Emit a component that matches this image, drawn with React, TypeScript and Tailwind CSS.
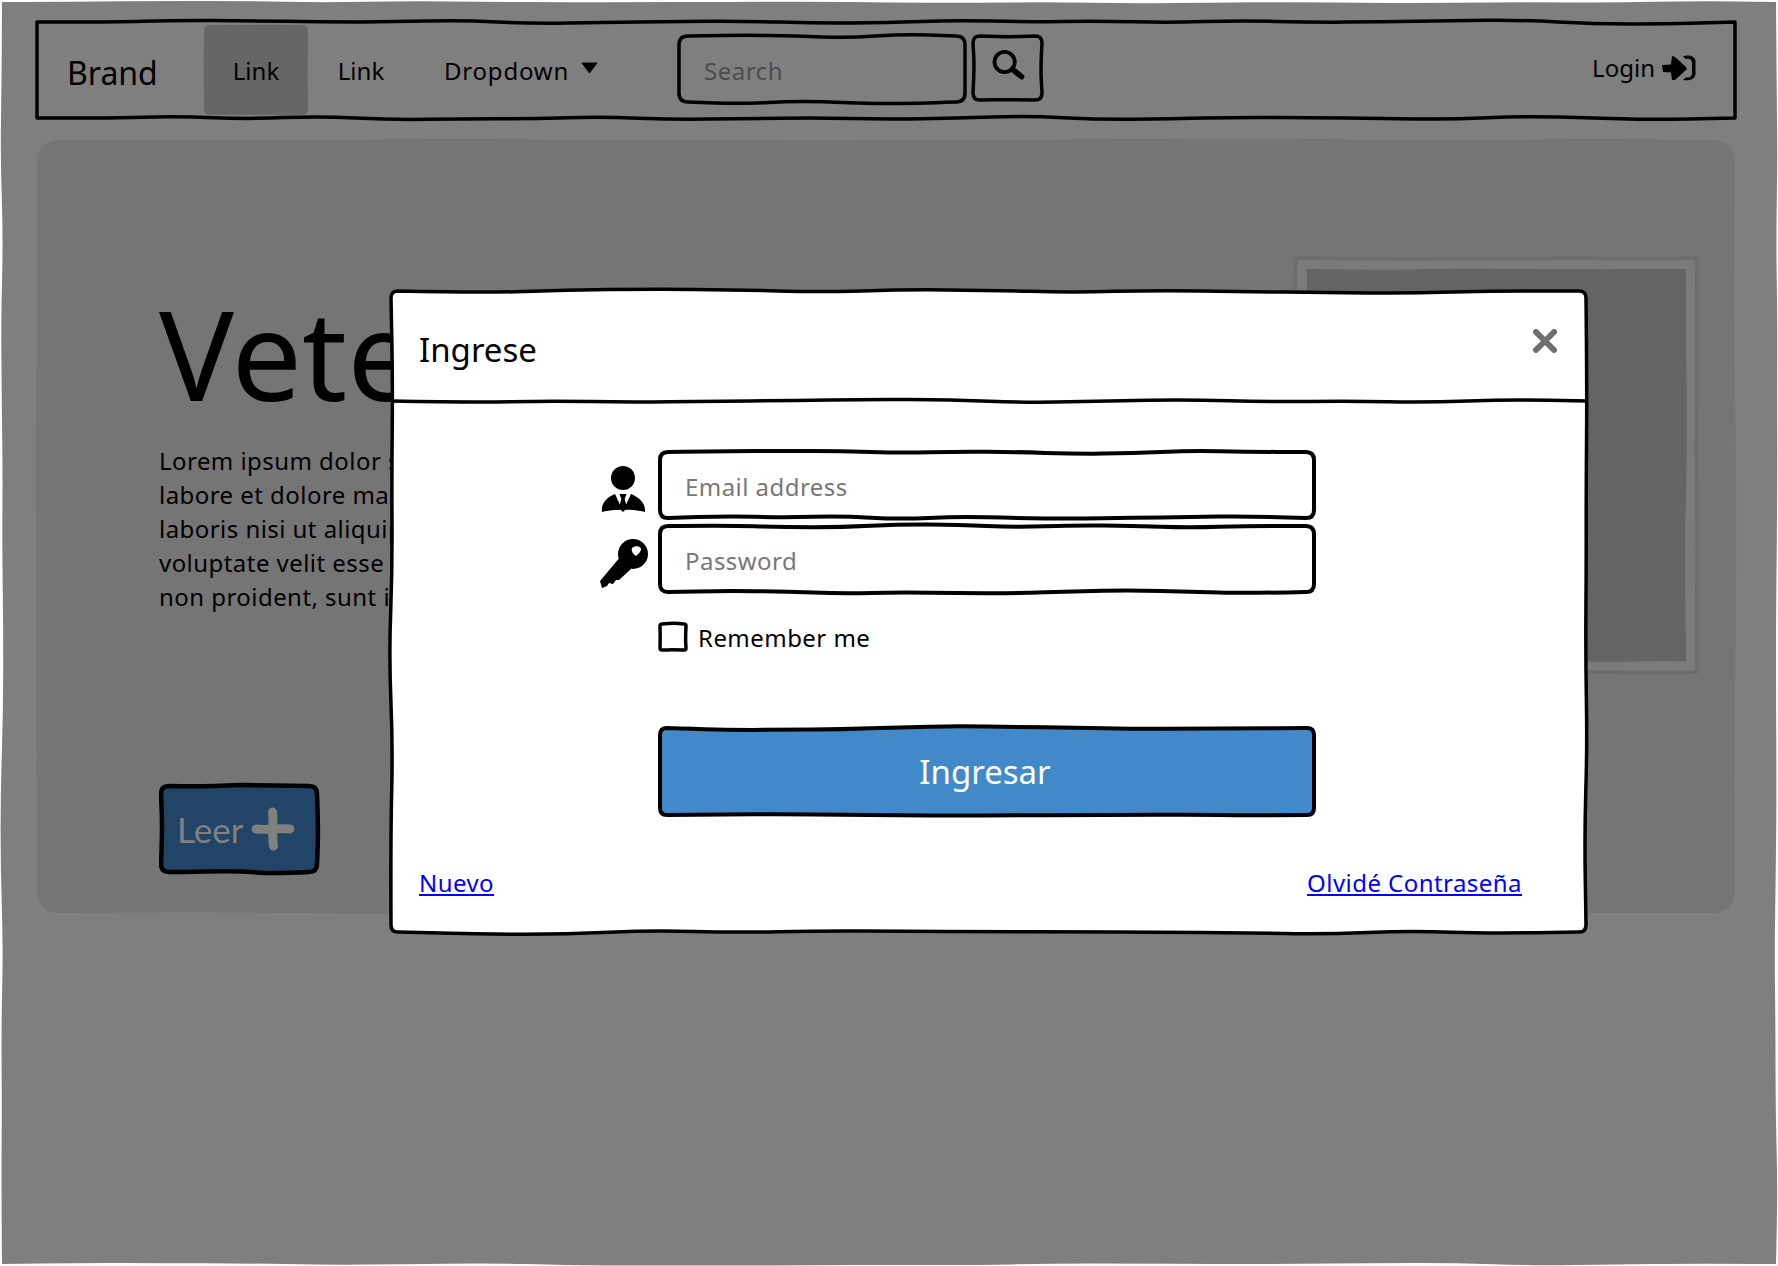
import { ReactNode } from 'react';

// small seeded generator so the hand drawn lines stay the same on each render
function makeRandom(seed: number) {
  let s = seed * 9301 + 49297;
  return () => {
    s = (s * 9301 + 49297) % 233280;
    return s / 233280;
  };
}

function wobbleSide(x0: number, y0: number, x1: number, y1: number, rnd: () => number, amp: number, step: number) {
  const len = Math.hypot(x1 - x0, y1 - y0);
  const n = Math.max(1, Math.round(len / step));
  const nx = -(y1 - y0) / len;
  const ny = (x1 - x0) / len;
  const pts: [number, number][] = [[x0, y0]];
  for (let i = 1; i < n; i++) {
    const off = (rnd() - 0.5) * 2 * amp;
    pts.push([x0 + ((x1 - x0) * i) / n + nx * off, y0 + ((y1 - y0) * i) / n + ny * off]);
  }
  pts.push([x1, y1]);
  let d = '';
  for (let i = 1; i < pts.length - 1; i++) {
    const mx = (pts[i][0] + pts[i + 1][0]) / 2;
    const my = (pts[i][1] + pts[i + 1][1]) / 2;
    d += `Q${pts[i][0].toFixed(1)} ${pts[i][1].toFixed(1)} ${mx.toFixed(1)} ${my.toFixed(1)} `;
  }
  return d + `L${x1} ${y1} `;
}

function boxPath(w: number, h: number, r: number, seed: number, amp: number, step: number) {
  const rnd = makeRandom(seed);
  let d = `M${r} 0 `;
  d += wobbleSide(r, 0, w - r, 0, rnd, amp, step);
  d += `Q${w} 0 ${w} ${r} `;
  d += wobbleSide(w, r, w, h - r, rnd, amp, step);
  d += `Q${w} ${h} ${w - r} ${h} `;
  d += wobbleSide(w - r, h, r, h, rnd, amp, step);
  d += `Q0 ${h} 0 ${h - r} `;
  d += wobbleSide(0, h - r, 0, r, rnd, amp, step);
  d += `Q0 0 ${r} 0 Z`;
  return d;
}

interface SketchProps {
  w: number;
  h: number;
  seed: number;
  r?: number;
  fill?: string;
  stroke?: string;
  strokeWidth?: number;
  amp?: number;
  step?: number;
}

// the wobbly outline behind a box, parent needs "relative isolate"
function Sketch({ w, h, seed, r = 6, fill = 'none', stroke = 'none', strokeWidth = 3, amp = 2, step = 60 }: SketchProps) {
  return (
    <svg width={w} height={h} className="absolute left-0 top-0 -z-10 overflow-visible pointer-events-none">
      <path d={boxPath(w, h, r, seed, amp, step)} fill={fill} stroke={stroke} strokeWidth={strokeWidth} strokeLinejoin="round" />
    </svg>
  );
}

function NavLink({ children, className }: { children: ReactNode; className: string }) {
  return <a className={`flex items-center justify-center text-[24px] text-black ${className}`}>{children}</a>;
}

function SearchGlyph() {
  return (
    <svg width="36" height="36" viewBox="0 0 32 32" fill="none" stroke="black">
      <circle cx="13" cy="12.5" r="9" strokeWidth="3.4" />
      <path d="M20 19 L28 25.5" strokeWidth="5" strokeLinecap="round" />
    </svg>
  );
}

function LoginGlyph() {
  return (
    <svg width="34" height="26" viewBox="0 0 34 26" fill="black" stroke="none">
      <path d="M0 10 L9 9.5 L10 1 L13 2 L24 12 L25 14 L13 25 L10 25 L9 17.5 L1 17 Z" />
      <path d="M21 1 C27 -0.5 33 1 33.5 6 L33.5 19 C33 24.5 27 26 21 25 L24 22.5 C27 23 30 22 30 18 L30 8 C30 4 27 3 23.5 4 Z" />
    </svg>
  );
}

function PlusGlyph() {
  return (
    <svg width="44" height="44" viewBox="0 0 44 44" fill="none" stroke="#808080" strokeWidth="9" strokeLinecap="round">
      <path d="M21.5 5 C23 15 20.5 28 22.5 39" />
      <path d="M5 22 C16 23.5 28 20.5 39 22" />
    </svg>
  );
}

function UserGlyph() {
  return (
    <svg width="48" height="54" viewBox="0 0 48 54" className="shrink-0">
      <circle cx="23" cy="15" r="12" fill="black" />
      <path d="M2 49 C1 42 5 35 15 31 L31 31 C41 35 46 42 45 49 C35 46 12 46 2 49 Z" fill="black" />
      <path d="M15 31 L23 48 L31 31 Z" fill="white" />
      <path d="M19.5 31 H26.5 L24.7 36 L27 45 L23 49 L19 45 L21.3 36 Z" fill="black" />
    </svg>
  );
}

function KeyGlyph() {
  return (
    <svg width="52" height="54" viewBox="0 0 52 54" className="shrink-0">
      <circle cx="35" cy="18" r="15" fill="black" />
      <path d="M23 20 L2 45 L4 52 L9 50 L11 47 L15 48 L18 44 L21 44 L33 33 Z" fill="black" />
      <path d="M34 12 C37 9 43 10 43 13 C43 16 40 18 38 20 C35 18 33 15 34 12 Z" fill="white" />
    </svg>
  );
}

function LoginModal() {
  return (
    <div className="absolute left-[391px] top-[291px] isolate h-[641px] w-[1195px]">
      <Sketch w={1195} h={641} seed={11} fill="#ffffff" stroke="#000000" strokeWidth={3.5} r={7} step={85} amp={2.4} />
      <div className="relative flex h-[110px] items-start justify-between pl-[28px] pr-[29px]">
        <h4 className="pt-[37px] text-[33px] leading-[44px] text-black">Ingrese</h4>
        <svg width="24" height="24" viewBox="0 0 24 24" className="mt-[38px]" stroke="#6f6f6f" strokeWidth="6" strokeLinecap="round">
          <path d="M3 3 L21 21 M21 3 L3 21" />
        </svg>
        <svg width="1195" height="4" className="absolute left-0 top-[108px] overflow-visible">
          <path d={`M0 2 ${wobbleSide(0, 2, 1197, 2, makeRandom(5), 1.8, 80)}`} fill="none" stroke="black" strokeWidth="3.5" />
        </svg>
      </div>

      <div className="flex flex-col pl-[269px] pt-[51px] tracking-[0.45px]">
        <div className="relative flex w-[654px] flex-col gap-[8px]">
          <div className="relative isolate h-[66px] w-[654px]">
            <Sketch w={654} h={66} seed={21} stroke="#000000" strokeWidth={4} r={8} />
            <input placeholder="Email address" className="h-full w-full bg-transparent pl-[25px] pt-[2px] text-[24px] tracking-[0.45px] text-black outline-none placeholder:text-[#777777]" />
            <div className="absolute left-[-60px] top-[11px]"><UserGlyph /></div>
          </div>
          <div className="relative isolate h-[66px] w-[654px]">
            <Sketch w={654} h={66} seed={33} stroke="#000000" strokeWidth={4} r={8} />
            <input placeholder="Password" className="h-full w-full bg-transparent pl-[25px] pt-[2px] text-[24px] tracking-[0.45px] text-black outline-none placeholder:text-[#777777]" />
            <div className="absolute left-[-62px] top-[10px]"><KeyGlyph /></div>
          </div>
        </div>

        <label className="mt-[31px] flex h-[28px] items-center gap-[12px] text-[24px] text-black">
          <span className="relative isolate h-[26px] w-[26px]">
            <Sketch w={26} h={26} seed={4} stroke="#000000" strokeWidth={3.5} r={2} step={13} amp={1.2} />
          </span>
          <span className="pt-[1px]">Remember me</span>
        </label>

        <button className="relative isolate mt-[77px] flex h-[87px] w-[654px] items-center justify-center pr-[4px] text-[33px] tracking-normal text-white">
          <Sketch w={654} h={87} seed={47} fill="#4289c9" stroke="#000000" strokeWidth={4} r={7} />
          Ingresar
        </button>
      </div>

      <div className="flex items-center justify-between pl-[28px] pr-[64px] pt-[52px] text-[24px] leading-[32px] tracking-[0.45px]">
        <a href="#" className="text-[#0000ff] underline">Nuevo</a>
        <a href="#" className="text-[#0000ff] underline">Olvidé Contraseña</a>
      </div>
    </div>
  );
}

export default function App() {
  return (
    <div className="relative isolate h-[1266px] w-[1778px] overflow-hidden bg-white font-['Noto_Sans',sans-serif] text-black">
      <svg width="1778" height="1266" className="absolute left-0 top-0 -z-10">
        <path d={boxPath(1774, 1262, 0, 2, 1.6, 80)} transform="translate(2 2)" fill="#7f7f7f" />
      </svg>

      <div className="flex flex-col px-[37px] pt-[22px]">
        <nav className="relative isolate flex h-[96px] w-[1698px] items-stretch">
          <Sketch w={1698} h={96} seed={7} stroke="#000000" strokeWidth={3.5} r={0} step={70} amp={2.2} />
          <a className="flex w-[167px] items-center pl-[30px] pt-[5px] text-[32px] text-black">Brand</a>
          <div className="relative isolate my-[3px] flex w-[104px]">
            <Sketch w={104} h={90} seed={9} fill="#666666" r={6} amp={1} step={40} />
            <NavLink className="w-full pt-[1px]">Link</NavLink>
          </div>
          <NavLink className="w-[106px] pt-[1px]">Link</NavLink>
          <NavLink className="w-[184px] justify-start gap-[12px] pl-[30px] pt-[1px] tracking-[0.8px]">
            Dropdown
            <svg width="20" height="14" viewBox="0 0 20 14" className="mb-[6px]"><path d="M1 1 H19 L10 13 Z" fill="black" stroke="black" strokeLinejoin="round" /></svg>
          </NavLink>
          <div className="ml-[81px] flex items-start gap-[8px] pt-[14px]">
            <div className="relative isolate h-[66px] w-[286px]">
              <Sketch w={286} h={66} seed={15} stroke="#000000" strokeWidth={3.5} r={9} step={50} />
              <input placeholder="Search" className="h-full w-full bg-transparent pl-[25px] pt-[2px] text-[24px] tracking-[0.5px] outline-none placeholder:text-[#4d4d4d]" />
            </div>
            <button className="relative isolate flex h-[64px] w-[69px] items-start justify-center pt-[12px]">
              <Sketch w={69} h={64} seed={18} stroke="#000000" strokeWidth={3.5} r={7} step={30} />
              <SearchGlyph />
            </button>
          </div>
          <div className="ml-auto flex items-center gap-[7px] pr-[39px] pb-[4px] text-[24px]">
            <a>Login</a>
            <LoginGlyph />
          </div>
        </nav>

        <section className="relative isolate mt-[22px] flex h-[773px] w-[1698px] justify-between pl-[122px] pr-[38px]">
          <Sketch w={1698} h={773} seed={25} fill="#757575" r={24} step={140} amp={1.5} />
          <div className="flex w-[1100px] flex-col overflow-hidden whitespace-nowrap">
            <h1 className="mt-[125px] h-[175px] text-[125px] leading-[175px] text-black">Veterinaria</h1>
            <p className="mt-[4px] text-[24px] leading-[34px] tracking-[0.45px]">
              Lorem ipsum dolor sit amet, consectetur adipiscing elit, sed do eiusmod tempor incididunt ut<br />
              labore et dolore magna aliqua. Ut enim ad minim veniam, quis nostrud exercitation ullamco<br />
              laboris nisi ut aliquip ex ea commodo consequat. Duis aute irure dolor in reprehenderit in<br />
              voluptate velit esse cillum dolore eu fugiat nulla pariatur. Excepteur sint occaecat cupidatat<br />
              non proident, sunt in culpa qui officia deserunt mollit anim id est laborum.
            </p>
            <button className="relative isolate ml-[2px] mt-[172px] flex h-[86px] w-[156px] items-center gap-[8px] pl-[16px] font-['Lato',sans-serif] text-[35px] text-[#808080]">
              <Sketch w={156} h={86} seed={31} fill="#224466" stroke="#000000" strokeWidth={4.5} r={8} step={40} />
              Leer
              <PlusGlyph />
            </button>
          </div>
          <div className="relative isolate mt-[118px] h-[414px] w-[401px] shrink-0 p-[11px]">
            <Sketch w={401} h={414} seed={37} fill="#7b7b7b" stroke="#6d6d6d" strokeWidth={3.5} r={0} step={60} amp={1.2} />
            <div className="relative isolate h-[392px] w-[379px]">
              <Sketch w={379} h={392} seed={41} fill="#646464" r={0} step={70} amp={1.2} />
            </div>
          </div>
        </section>
      </div>

      <LoginModal />
    </div>
  );
}
